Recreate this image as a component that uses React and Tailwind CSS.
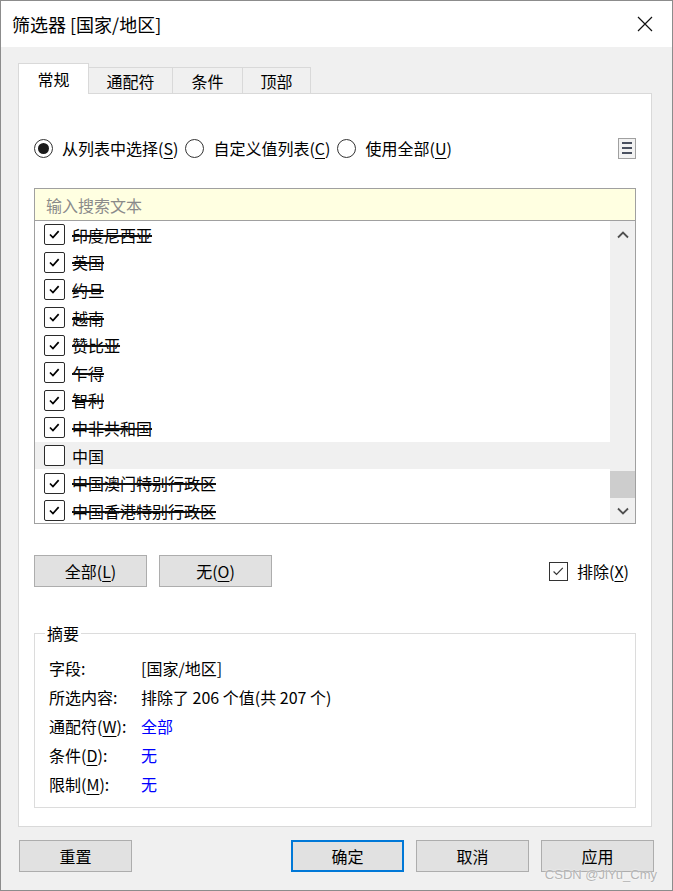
import React from 'react'

const font = "font-['Noto_Sans_CJK_SC','Noto_Sans',sans-serif]"

const Acc = ({ k }) => (
  <>(<span className="underline underline-offset-[3px]">{k}</span>)</>
)

const Radio = ({ on }) => (
  <span className="w-[19px] h-[19px] shrink-0 rounded-full border border-[#333] bg-white flex items-center justify-center">
    {on && <span className="w-[11px] h-[11px] rounded-full bg-[#1a1a1a]" />}
  </span>
)

const ListCheck = ({ on }) => (
  <span className="w-[21px] h-[21px] shrink-0 border-[1.5px] border-[#2b2b2b] rounded-[2px] bg-white flex items-center justify-center">
    {on && (
      <svg viewBox="0 0 21 21" className="w-[21px] h-[21px]" fill="none" stroke="#000" strokeWidth="1.9">
        <path d="M5.5 10.5l3.3 3.4 6.3-7.2" />
      </svg>
    )}
  </span>
)

const Chevron = ({ down }) => (
  <svg viewBox="0 0 12 8" className="w-[12px] h-[8px]" fill="none" stroke="#505050" strokeWidth="1.8">
    <path d={down ? 'M1 1.5l5 5 5-5' : 'M1 6.5l5-5 5 5'} />
  </svg>
)

const Btn = ({ children, primary, className = '' }) => (
  <div
    className={
      'w-[113px] h-[32px] bg-[#e1e1e1] flex items-center justify-center text-[16px] leading-[20px] ' +
      (primary ? 'border-2 border-[#0078d7] ' : 'border border-[#adadad] ') +
      className
    }
  >
    {children}
  </div>
)

const countries = [
  { name: '印度尼西亚', on: true },
  { name: '英国', on: true },
  { name: '约旦', on: true },
  { name: '越南', on: true },
  { name: '赞比亚', on: true },
  { name: '乍得', on: true },
  { name: '智利', on: true },
  { name: '中非共和国', on: true },
  { name: '中国', on: false },
  { name: '中国澳门特别行政区', on: true },
  { name: '中国香港特别行政区', on: true },
]

const summary = [
  { label: <>字段:</>, value: '[国家/地区]' },
  { label: <>所选内容:</>, value: '排除了 206 个值(共 207 个)' },
  { label: <>通配符<Acc k="W" />:</>, value: '全部', blue: true },
  { label: <>条件<Acc k="D" />:</>, value: '无', blue: true },
  { label: <>限制<Acc k="M" />:</>, value: '无', blue: true },
]

export default function App() {
  return (
    <div className={`relative w-[673px] h-[891px] border border-[#8c8c8c] bg-[#f0f0f0] text-black overflow-hidden flex flex-col ${font}`}>
      {/* title bar */}
      <div className="h-[46px] shrink-0 bg-white flex items-center justify-between pl-[11px] pr-[19px]">
        <span className="text-[18px] leading-[24px]">筛选器 [国家/地区]</span>
        <svg viewBox="0 0 16 16" className="w-[16px] h-[16px]" fill="none" stroke="#111" strokeWidth="1.2">
          <path d="M1 1l14 14M15 1L1 15" />
        </svg>
      </div>

      <div className="pl-[17px] pr-[20px] pt-[16px]">
        {/* tabs */}
        <div className="flex items-end h-[30px] text-[16px] leading-[20px]">
          <div className="relative z-10 w-[71px] h-[31px] -mb-[1px] bg-white border border-b-0 border-[#d9d9d9] flex items-center justify-center">
            常规
          </div>
          <div className="w-[84px] h-[26px] border-t border-r border-[#d9d9d9] flex items-center justify-center">通配符</div>
          <div className="w-[70px] h-[26px] border-t border-r border-[#d9d9d9] flex items-center justify-center">条件</div>
          <div className="w-[68px] h-[26px] border-t border-r border-[#d9d9d9] flex items-center justify-center">顶部</div>
        </div>

        {/* panel */}
        <div className="h-[734px] bg-white border border-[#d9d9d9] px-[15px] flex flex-col text-[16px] leading-[20px]">
          {/* radio row */}
          <div className="mt-[40px] h-[28px] flex items-center">
            <Radio on />
            <span className="ml-[9px]">从列表中选择<Acc k="S" /></span>
            <span className="ml-[7px]"><Radio /></span>
            <span className="ml-[9px]">自定义值列表<Acc k="C" /></span>
            <span className="ml-[7px]"><Radio /></span>
            <span className="ml-[9px]">使用全部<Acc k="U" /></span>
            <div className="ml-auto w-[18px] h-[21px] border border-[#a0a0a0] bg-[#f2f2f2] flex flex-col items-center justify-center gap-[3px]">
              <span className="w-[10px] h-[2px] bg-[#4a5160]" />
              <span className="w-[10px] h-[2px] bg-[#4a5160]" />
              <span className="w-[10px] h-[2px] bg-[#4a5160]" />
            </div>
          </div>

          {/* search + list */}
          <div className="mt-[26px] border border-[#a0a0a0] flex flex-col">
            <div className="h-[32px] bg-[#ffffe1] border-b border-[#a0a0a0] flex items-center pl-[11px] text-[#8a8a8a]">
              输入搜索文本
            </div>
            <div className="h-[302px] flex">
              <div className="flex-1 overflow-hidden">
                {countries.map((c) => (
                  <div
                    key={c.name}
                    className={'h-[27.6px] flex items-center pl-[9px] ' + (c.on ? '' : 'bg-[#f0f0f0]')}
                  >
                    <ListCheck on={c.on} />
                    <span className={'ml-[7px] ' + (c.on ? 'line-through decoration-[1.5px] decoration-[#111]' : '')}>{c.name}</span>
                  </div>
                ))}
              </div>
              <div className="w-[25px] bg-[#f0f0f0] flex flex-col">
                <div className="h-[28px] flex items-center justify-center"><Chevron /></div>
                <div className="flex-1 flex flex-col justify-end">
                  <div className="h-[27px] bg-[#cdcdcd]" />
                </div>
                <div className="h-[25px] flex items-center justify-center"><Chevron down /></div>
              </div>
            </div>
          </div>

          {/* buttons row */}
          <div className="mt-[31px] h-[32px] flex items-center gap-[12px]">
            <Btn>全部<Acc k="L" /></Btn>
            <Btn>无<Acc k="O" /></Btn>
            <div className="ml-auto mr-[7px] flex items-center">
              <span className="w-[19px] h-[19px] border border-[#333] flex items-center justify-center">
                <svg viewBox="0 0 19 19" className="w-[17px] h-[17px]" fill="none" stroke="#333" strokeWidth="1.3">
                  <path d="M4 9.5l3.3 3.3 7-7.3" />
                </svg>
              </span>
              <span className="ml-[9px]">排除<Acc k="X" /></span>
            </div>
          </div>

          {/* summary */}
          <div className="relative mt-[46px] h-[175px] border border-[#dcdcdc] pt-[19px] pl-[14px]">
            <span className="absolute -top-[11px] left-[10px] bg-white px-[2px]">摘要</span>
            {summary.map((r, i) => (
              <div key={i} className="h-[29px] flex items-center">
                <span className="w-[92px] shrink-0">{r.label}</span>
                <span className={r.blue ? 'text-[#0000ff]' : ''}>{r.value}</span>
              </div>
            ))}
          </div>
        </div>
      </div>

      {/* bottom buttons */}
      <div className="mt-[13px] pl-[18px] pr-[18px] flex items-center gap-[12px]">
        <Btn>重置</Btn>
        <Btn primary className="ml-auto">确定</Btn>
        <Btn>取消</Btn>
        <Btn>应用</Btn>
      </div>

      <span className="absolute right-[15px] bottom-[7px] text-[13px] leading-[16px] text-[#b4b4b4] font-['Liberation_Sans',sans-serif] [text-shadow:0_0_2px_#fff]">
        CSDN @JiYu_Cmy
      </span>
    </div>
  )
}
